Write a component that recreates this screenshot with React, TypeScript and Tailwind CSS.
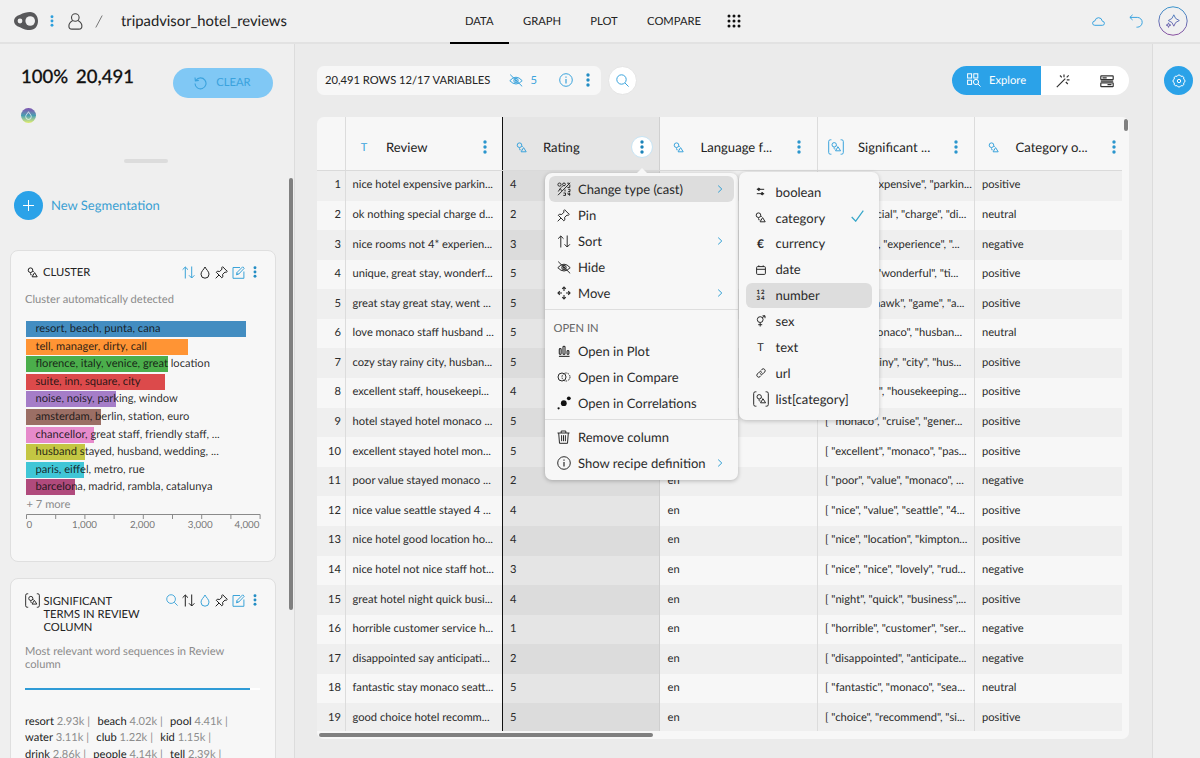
import type { ReactNode } from 'react';

type IconProps = { className?: string };

type Bar = { label: string; width: number; color: string };

const bars: Bar[] = [
  { label: 'resort, beach, punta, cana', width: 219.5, color: '#438dc1' },
  { label: 'tell, manager, dirty, call', width: 162, color: '#ff9434' },
  { label: 'florence, italy, venice, great location', width: 141.5, color: '#4bae4b' },
  { label: 'suite, inn, square, city', width: 138.5, color: '#dc4a4b' },
  { label: 'noise, noisy, parking, window', width: 89.5, color: '#a57dc8' },
  { label: 'amsterdam, berlin, station, euro', width: 74.5, color: '#9b6f65' },
  { label: 'chancellor, great staff, friendly staff, ...', width: 67.5, color: '#e68acb' },
  { label: 'husband stayed, husband, wedding, ...', width: 58.5, color: '#c4c643' },
  { label: 'paris, eiffel, metro, rue', width: 57.5, color: '#40c6d6' },
  { label: 'barcelona, madrid, rambla, catalunya', width: 49, color: '#b04a7c' },
];

const terms: [string, string][][] = [
  [['resort', '2.93k'], ['beach', '4.02k'], ['pool', '4.41k']],
  [['water', '3.11k'], ['club', '1.22k'], ['kid', '1.15k']],
  [['drink', '2.86k'], ['people', '4.14k'], ['tell', '2.39k']],
];

const rows: [string, string, string, string][] = [
  ['nice hotel expensive parkin...', '4', '[ "hotel", "expensive", "parkin...', 'positive'],
  ['ok nothing special charge d...', '2', '[ "ok", "special", "charge", "di...', 'neutral'],
  ['nice rooms not 4* experien...', '3', '[ "4* room", "experience", "...', 'negative'],
  ['unique, great stay, wonderf...', '5', '[ "unique", "wonderful", "ti...', 'positive'],
  ['great stay great stay, went ...', '5', '[ "stay seahawk", "game", "a...', 'positive'],
  ['love monaco staff husband ...', '5', '[ "love", "monaco", "husban...', 'neutral'],
  ['cozy stay rainy city, husban...', '5', '[ "cozy", "rainy", "city", "hus...', 'positive'],
  ['excellent staff, housekeepi...', '4', '[ "excellent", "housekeeping...', 'positive'],
  ['hotel stayed hotel monaco ...', '5', '[ "monaco", "cruise", "gener...', 'positive'],
  ['excellent stayed hotel mon...', '5', '[ "excellent", "monaco", "pas...', 'positive'],
  ['poor value stayed monaco ...', '2', '[ "poor", "value", "monaco", ...', 'negative'],
  ['nice value seattle stayed 4 ...', '4', '[ "nice", "value", "seattle", "4...', 'positive'],
  ['nice hotel good location ho...', '4', '[ "nice", "location", "kimpton...', 'positive'],
  ['nice hotel not nice staff hot...', '3', '[ "nice", "nice", "lovely", "rud...', 'negative'],
  ['great hotel night quick busi...', '4', '[ "night", "quick", "business",...', 'positive'],
  ['horrible customer service h...', '1', '[ "horrible", "customer", "ser...', 'negative'],
  ['disappointed say anticipati...', '2', '[ "disappointed", "anticipate...', 'negative'],
  ['fantastic stay monaco seatt...', '5', '[ "fantastic", "monaco", "sea...', 'neutral'],
  ['good choice hotel recomm...', '5', '[ "choice", "recommend", "si...', 'positive'],
];

function Dots({ className = 'h-[14px] w-[4px]' }: IconProps) {
  return (
    <svg viewBox="0 0 4 14" className={className} fill="currentColor">
      <circle cx="2" cy="2" r="1.7" />
      <circle cx="2" cy="7" r="1.7" />
      <circle cx="2" cy="12" r="1.7" />
    </svg>
  );
}

function CategoryIcon({ className = 'size-[11px]' }: IconProps) {
  return (
    <svg viewBox="0 0 11 11" className={className} fill="none" stroke="currentColor" strokeLinejoin="round">
      <circle cx="3.5" cy="3.2" r="2.3" />
      <path d="M3.500 5.500v2.300h1.800M5.700 4l1.300.8" strokeWidth=".7" />
      <path d="M7.600 5.600 10.200 9.800H5.100Z" />
    </svg>
  );
}

function ListCategoryIcon({ className = 'h-[16px] w-[16px]' }: IconProps) {
  return (
    <svg viewBox="0 0 16 16" className={className} fill="none" stroke="currentColor" strokeLinejoin="round">
      <path d="M3.400.8H2.400Q.7.800.7 2.400v11.200q0 1.600 1.700 1.600h1M12.600.8h1q1.700 0 1.700 1.600v11.200q0 1.600-1.700 1.600h-1" />
      <circle cx="6.200" cy="5.800" r="2.200" />
      <path d="M6.100 8v2h1.500M8.200 6.500l1.300.9" strokeWidth=".7" />
      <path d="M10 7.800l2.600 4H7.500Z" />
    </svg>
  );
}

function SortIcon({ className = 'h-[13px] w-[13px]' }: IconProps) {
  return (
    <svg viewBox="0 0 13 13" className={className} fill="none" stroke="currentColor">
      <path d="M3.300 12.500V1M.6 3.700 3.300 1 6 3.700M9.700.5V12M7 9.300 9.700 12l2.700-2.700" />
    </svg>
  );
}

function DropIcon({ className = 'h-[13px] w-[10px]' }: IconProps) {
  return (
    <svg viewBox="0 0 10 13" className={className} fill="none" stroke="currentColor">
      <path d="M5 1C4 3.400 1 5.400 1 8.200a4 4 0 0 0 8 0C9 5.400 6 3.400 5 1Z" />
    </svg>
  );
}

function PinIcon({ className = 'size-[13px]' }: IconProps) {
  return (
    <svg viewBox="0 0 13 13" className={className} fill="none" stroke="currentColor" strokeLinejoin="round">
      <path d="M7.600.7 12.300 5.400 11.200 6.300l-1.200-.2-2.400 2.300.3 2.400-1.100 1L1.300 6.300l1-1.100 2.400.3L7 3.100 6.700 1.800ZM4 9 .7 12.300" />
    </svg>
  );
}

function EditIcon({ className = 'size-[13px]' }: IconProps) {
  return (
    <svg viewBox="0 0 13 13" className={className} fill="none" stroke="currentColor">
      <path d="M8 1.500H1v10.800h10.900V5.500" />
      <path d="m4.400 8.800.6-2.300L10.700.8l1.500 1.500L6.600 8.200ZM5 6.600l1.500 1.500" />
    </svg>
  );
}

function SearchIcon({ className = 'size-[13px]' }: IconProps) {
  return (
    <svg viewBox="0 0 13 13" className={className} fill="none" stroke="currentColor">
      <circle cx="5.500" cy="5.500" r="4.700" />
      <path d="m9 9 3.600 3.600" />
    </svg>
  );
}

function EyeOffIcon({ className = 'h-[13px] w-[14px]' }: IconProps) {
  return (
    <svg viewBox="0 0 14 13" className={className} fill="none" stroke="currentColor">
      <path d="M.8 6.700Q7-.3 13.200 6.700 7 13.300.8 6.700ZM1.200.6l12 11.800" />
      <circle cx="7" cy="6.600" r="2.200" />
      <circle cx="7" cy="6.600" r=".8" fill="currentColor" />
    </svg>
  );
}

function InfoIcon({ className = 'size-[14px]' }: IconProps) {
  return (
    <svg viewBox="0 0 14 14" className={className} fill="none" stroke="currentColor">
      <circle cx="7" cy="7" r="6.300" />
      <path d="M7 6v4.400M7 3.500v1.300" strokeWidth="1.200" />
    </svg>
  );
}

function RotateIcon({ className = 'size-[13px]' }: IconProps) {
  return (
    <svg viewBox="0 0 13 13" className={className} fill="none" stroke="currentColor" strokeWidth="1.100">
      <path d="M2 3.200A5.500 5.500 0 1 1 1 6.500M1 .5l.4 3.300 3.400-.4" />
    </svg>
  );
}

function GearIcon() {
  return (
    <svg viewBox="0 0 14 14" className="size-[14px]" fill="none" stroke="currentColor" strokeLinejoin="round">
      <path d="M11.620 5.090a2 2 0 0 1 0 3.820 2 2 0 0 1-2.710 2.710 2 2 0 0 1-3.820 0 2 2 0 0 1-2.710-2.710 2 2 0 0 1 0-3.820 2 2 0 0 1 2.710-2.710 2 2 0 0 1 3.820 0 2 2 0 0 1 2.710 2.710Z" />
      <circle cx="7" cy="7" r="1.700" />
    </svg>
  );
}

function CastIcon() {
  return (
    <svg viewBox="0 0 14 14" className="size-[14px]" fill="none" stroke="currentColor">
      <path d="M1 13.200 13.200.8" />
      <circle cx="2.500" cy="2.600" r="1.600" />
      <circle cx="7" cy="2.400" r="1.400" />
      <path d="m4 5.700 1.600-1.600M1.300 9.500l2-3.200 1.200 2.500M10.200 1.200h2.200M12.800 2.600v2.800h-2.400M8 7.500v2M11.200 7.300h1.800v2.200h-1.800M6.500 11h2v2.400H6.300M11 10.700v1.600h2.300M12.600 10.500v3.200" />
    </svg>
  );
}

function MoveIcon() {
  return (
    <svg viewBox="0 0 14 14" className="size-[14px]" fill="none" stroke="currentColor" strokeWidth="1.100">
      <path d="M7 1v4M7 9v4M1 7h4M9 7h4M5.200 2.800 7 1l1.800 1.800M5.200 11.200 7 13l1.800-1.800M2.800 5.200 1 7l1.800 1.800M11.200 5.200 13 7l-1.800 1.800" />
    </svg>
  );
}

function PlotIcon() {
  return (
    <svg viewBox="0 0 13 13" className="size-[12px]" fill="none" stroke="currentColor" strokeWidth="1.200">
      <path d="M1 12.300h11.500" />
      <rect x="1.400" y="3.800" width="2" height="6.400" rx="1" />
      <rect x="5.400" y="1.400" width="2.200" height="8.800" rx="1" />
      <rect x="9.800" y="6" width="2" height="4.200" rx="1" />
    </svg>
  );
}

function CompareIcon() {
  return (
    <svg viewBox="0 0 14 10" className="h-[10px] w-[14px]" fill="none" stroke="currentColor">
      <circle cx="5" cy="5" r="4" />
      <circle cx="9" cy="5" r="4" strokeDasharray="1.600 .9" />
    </svg>
  );
}

function CorrelationIcon() {
  return (
    <svg viewBox="0 0 14 14" className="size-[14px]" fill="#111">
      <circle cx="1.600" cy="12.300" r="1.100" />
      <circle cx="6.800" cy="7.200" r="2.900" />
      <circle cx="11.800" cy="2.300" r="1.900" />
    </svg>
  );
}

function TrashIcon() {
  return (
    <svg viewBox="0 0 13 14" className="h-[14px] w-[13px]" fill="none" stroke="currentColor">
      <path d="M.5 3h12M4.200 3V1h4.600v2M1.700 3l.8 10.300h8L11.300 3M4.600 5.200v6M6.500 5.200v6M8.400 5.200v6" />
    </svg>
  );
}

function ChevronIcon() {
  return (
    <svg viewBox="0 0 6 8" className="h-[8px] w-[6px] text-[#2f9fd4]" fill="none" stroke="currentColor">
      <path d="m1.200.6 3.600 3.400-3.600 3.400" />
    </svg>
  );
}

function BooleanIcon() {
  return (
    <svg viewBox="0 0 9 9" className="size-[9px]" fill="currentColor" stroke="currentColor">
      <path d="M.8 2.300h7.400M.8 6.700h7.400" />
      <circle cx="2.800" cy="2.300" r="1.100" />
      <circle cx="6.200" cy="6.700" r="1.100" />
    </svg>
  );
}

function CalendarIcon() {
  return (
    <svg viewBox="0 0 10 10" className="size-[10px]" fill="none" stroke="currentColor">
      <rect x=".6" y="1.600" width="8.800" height="7.800" rx="1" />
      <path d="M.6 4.300h8.800M2.800.4v1.500M7.200.4v1.500" />
    </svg>
  );
}

function SexIcon() {
  return (
    <svg viewBox="0 0 10 12" className="h-[12px] w-[10px]" fill="none" stroke="currentColor">
      <circle cx="4.200" cy="4.600" r="2.900" />
      <path d="M4.200 7.500v4M2.200 9.700h4M6.300 2.600 9 .8M6.500.8H9v2.400" />
    </svg>
  );
}

function LinkIcon() {
  return (
    <svg viewBox="0 0 10 10" className="size-[10px]" fill="none" stroke="currentColor" strokeLinecap="round">
      <path d="M4.200 5.800a1.900 1.900 0 0 0 2.700 0l1.700-1.700A1.900 1.900 0 0 0 5.900 1.400l-.8.8M5.800 4.200a1.900 1.900 0 0 0-2.700 0L1.400 5.900a1.900 1.900 0 0 0 2.700 2.700l.8-.8" />
    </svg>
  );
}

function NumberIcon() {
  return (
    <span className="grid grid-cols-2 gap-x-px text-center text-[6px] leading-[5.500px] font-black">
      <span>1</span>
      <span>2</span>
      <span>3</span>
      <span>4</span>
    </span>
  );
}

function Header() {
  return (
    <header className="flex h-[44px] shrink-0 border-b-2 border-[#e2e2e2] bg-[#f0f0f0]">
      <div className="flex h-[42px] w-[450px] items-center pl-[14px]">
        <svg viewBox="0 0 24 18" className="h-[18px] w-[24px]">
          <path d="M6 2.800C9 .8 13 0 16 0c5 0 8 4 8 9s-3 9-8 9c-3 0-7-.8-10-2.800C2 14 0 12 0 9s2-5 6-6.200Z" fill="#58585a" />
          <circle cx="16.200" cy="9" r="4.800" fill="#f0f0f0" />
          <circle cx="6" cy="9" r="2.400" fill="#f0f0f0" />
        </svg>
        <Dots className="ml-[12px] h-[12px] w-[4px] text-[#2e9fdc]" />
        <svg viewBox="0 0 15 17" className="ml-[14px] h-[17px] w-[15px]" fill="none" stroke="#444" strokeWidth="1.100">
          <circle cx="7.300" cy="4.500" r="3.800" />
          <path d="M4.800 7.400Q.9 9.600.9 12.900q0 3.200 3 3.200h7q3 0 3-3.200 0-3.300-4-5.500" />
        </svg>
        <svg viewBox="0 0 8 13" className="ml-[12px] h-[13px] w-[8px]" stroke="#777">
          <path d="M.8 12.500 7.200.5" />
        </svg>
        <span className="ml-[18px] text-[14.800px] text-[#222]">tripadvisor_hotel_reviews</span>
      </div>
      <nav className="flex text-[11.200px] text-[#222]">
        <span className="flex h-[44px] w-[58.500px] justify-center border-b-2 border-black leading-[44px]">DATA</span>
        <span className="flex w-[67px] justify-center leading-[44px]">GRAPH</span>
        <span className="flex w-[57px] justify-center leading-[44px]">PLOT</span>
        <span className="flex w-[83px] justify-center leading-[44px]">COMPARE</span>
        <svg viewBox="0 0 14 14" className="mt-[14px] ml-[11px] size-[14px]" fill="#111">
          {[2, 7, 12].map((y) => [2, 7, 12].map((x) => <circle key={`${x}-${y}`} cx={x} cy={y} r="1.500" />))}
        </svg>
      </nav>
      <div className="ml-auto flex h-[42px] items-center pr-[12px] text-[#3aa3df]">
        <svg viewBox="0 0 13 9" className="h-[9px] w-[13px]" fill="none" stroke="currentColor">
          <path d="M2.800 8.300h7.600a2 2 0 0 0 0-4Q9.600.7 6.600.7T3 3.800Q.6 4.200.6 6.200q0 2.100 2.200 2.100Z" />
        </svg>
        <svg viewBox="0 0 14 14" className="ml-[24px] h-[14px] w-[14px]" fill="none" stroke="currentColor">
          <path d="M3.600.8.900 3.400 3.600 6M.9 3.400h7.400a4.900 4.900 0 0 1 0 9.800h-.8" />
        </svg>
        <svg viewBox="0 0 30 30" className="ml-[15px] size-[30px]" fill="none" stroke="url(#sparkle)">
          <defs>
            <linearGradient id="sparkle" x1="0" y1="0" x2="0" y2="30" gradientUnits="userSpaceOnUse">
              <stop offset="0" stopColor="#3796cd" />
              <stop offset="1" stopColor="#8c4d9e" />
            </linearGradient>
          </defs>
          <circle cx="15" cy="15" r="14.200" />
          <path d="M15.800 8.800q1 4.500 5.500 5.700-4.500 1.200-5.500 5.700-1-4.500-5.500-5.700 4.500-1.200 5.500-5.700Z" />
          <path d="m10.500 16.800.6 1.700 1.700.6-1.700.6-.6 1.700-.6-1.700-1.700-.6 1.700-.6Z" />
        </svg>
      </div>
    </header>
  );
}

function ClusterCard() {
  return (
    <section className="h-[312px] w-[266px] rounded-[8px] border border-[#dfdfdf] bg-[#f7f7f7] pt-[13px] pl-[14px]">
      <div className="flex h-[16px] items-center text-[#222]">
        <CategoryIcon className="ml-[2px] size-[11px]" />
        <h2 className="ml-[5px] w-[138.500px] pt-[2px] text-[11.200px]">CLUSTER</h2>
        <SortIcon className="h-[13px] w-[13px] text-[#3ba3d8]" />
        <DropIcon className="ml-[5px] h-[13px] w-[10px]" />
        <PinIcon className="ml-[5px] size-[13px]" />
        <EditIcon className="ml-[4px] size-[13px] text-[#3ba3d8]" />
        <Dots className="ml-[8px] h-[12px] w-[4px] text-[#238dc4]" />
      </div>
      <p className="mt-[12px] text-[11.150px] leading-[16px] text-[#8b8b8b]">Cluster automatically detected</p>
      <div className="mt-[13px] ml-px flex flex-col">
        {bars.map((bar) => (
          <div key={bar.label} className="relative h-[17.600px]">
            <div className="h-[16px]" style={{ width: bar.width, backgroundColor: bar.color }} />
            <span className="absolute top-0 left-[9.500px] text-[11.150px] leading-[16px] whitespace-nowrap text-[#111]/90">
              {bar.label}
            </span>
          </div>
        ))}
      </div>
      <p className="ml-[1.500px] text-[11.150px] leading-[15px] text-[#8b8b8b]">+ 7 more</p>
      <svg viewBox="0 0 235 5" className="mt-[2px] ml-px h-[5px] w-[235px]" fill="none" stroke="#8a8a8a">
        <path d="M.5 5V.5h233.600V5M29.700.5V5M58.900.5V5M88.100.5V5M117.300.5V5M146.500.5V5M175.700.5V5M204.900.5V5" />
      </svg>
      <div className="ml-[1.500px] flex w-[233px] justify-between text-[9.800px] leading-[13px] text-[#777]">
        <span>0</span>
        <span className="ml-[18px]">1,000</span>
        <span className="ml-[11px]">2,000</span>
        <span className="ml-[11px]">3,000</span>
        <span>4,000</span>
      </div>
    </section>
  );
}

function TermsCard() {
  return (
    <section className="mt-[16px] h-[300px] w-[266px] rounded-[8px] border border-[#dfdfdf] bg-[#f7f7f7] pt-[13px] pl-[14px]">
      <div className="flex items-start text-[#222]">
        <ListCategoryIcon className="mt-[1px] h-[15px] w-[15px]" />
        <h2 className="ml-[3.500px] w-[122px] pt-[2.500px] text-[11.200px] leading-[13px]">
          SIGNIFICANT
          <br />
          TERMS IN REVIEW
          <br />
          COLUMN
        </h2>
        <div className="flex h-[16px] items-center">
          <SearchIcon className="size-[12px] text-[#3ba3d8]" />
          <SortIcon className="ml-[4px] h-[13px] w-[13px]" />
          <DropIcon className="ml-[5px] h-[13px] w-[10px] text-[#3ba3d8]" />
          <PinIcon className="ml-[5px] size-[13px]" />
          <EditIcon className="ml-[4px] size-[13px] text-[#3ba3d8]" />
          <Dots className="ml-[8px] h-[12px] w-[4px] text-[#238dc4]" />
        </div>
      </div>
      <p className="mt-[11px] text-[11.150px] leading-[13px] text-[#8b8b8b]">
        Most relevant word sequences in Review
        <br />
        column
      </p>
      <div className="mt-[17.500px] h-[2px] w-[235px] bg-white">
        <div className="h-full w-[225px] bg-[#2f9bd6]" />
      </div>
      <div className="mt-[23.500px] text-[11.150px] leading-[16.500px] whitespace-pre text-[#222]">
        {terms.map((line) => (
          <div key={line[0][0]}>
            {line.map(([word, count]) => (
              <span key={word} className="mr-[7.300px]">
                {word} <span className="text-[#8d8d8d]">{count} |</span>
              </span>
            ))}
          </div>
        ))}
      </div>
    </section>
  );
}

function Sidebar() {
  return (
    <aside className="flex w-[295px] shrink-0 flex-col border-r border-[#dcdcdc] bg-[#efefef]">
      <div className="h-[134px] pt-[20px] pl-[21px]">
        <div className="flex items-start">
          <div className="flex w-[151.500px] gap-[8px] text-[18.500px] leading-[24px] font-medium text-[#111] [-webkit-text-stroke:0.250px_#111]">
            <span>100%</span>
            <span>20,491</span>
          </div>
          <div className="mt-[4px] flex h-[30px] w-[100px] items-center justify-center gap-[9px] rounded-full bg-[#80c8f5] text-[11.200px] text-[#3aa2dd]">
            <RotateIcon />
            <span className="pt-px">CLEAR</span>
          </div>
        </div>
        <div className="mt-[10px] flex size-[15px] items-center justify-center rounded-full bg-linear-to-b from-[#7b4fb0] via-[#469eb0] to-[#e4ee62] text-white">
          <DropIcon className="h-[9px] w-[7px]" />
        </div>
        <div className="mt-[36px] ml-[103px] h-[4px] w-[44px] rounded-full bg-[#dcdcdc]" />
      </div>
      <div className="flex min-h-0 flex-1 overflow-hidden">
        <div className="w-[289px] pl-[10px]">
          <div className="mt-[13px] mb-[30px] ml-[4px] flex items-center">
            <div className="flex size-[29px] items-center justify-center rounded-full bg-[#2ba2e8] text-white">
              <svg viewBox="0 0 11 11" className="size-[11px]" stroke="currentColor">
                <path d="M5.500 0v11M0 5.500h11" />
              </svg>
            </div>
            <span className="ml-[8px] text-[13px] text-[#3a9fd3]">New Segmentation</span>
          </div>
          <ClusterCard />
          <TermsCard />
        </div>
        <div className="h-[432px] w-[4px] rounded-full bg-[#808080]" />
      </div>
    </aside>
  );
}

function Toolbar() {
  return (
    <div className="flex h-[30px] items-center">
      <div className="flex h-[29px] w-[284px] items-center rounded-[7px] bg-[#f7f7f7] pl-[8px] text-[11.200px] text-[#222]">
        <span className="w-[184px] pt-[2px] whitespace-nowrap">20,491 ROWS 12/17 VARIABLES</span>
        <EyeOffIcon className="h-[13px] w-[14px] text-[#3aa3dc]" />
        <span className="ml-[7.500px] w-[28.500px] pt-[2px] text-[#3aa3dc]">5</span>
        <InfoIcon className="size-[14px] text-[#3aa3dc]" />
        <Dots className="ml-[13px] h-[14px] w-[4px] text-[#238dc4]" />
      </div>
      <div className="ml-[7px] flex size-[29px] items-center justify-center rounded-full border border-[#e4e4e4] bg-white text-[#3aa3dc]">
        <SearchIcon />
      </div>
      <div className="ml-auto flex h-[29px] w-[177px] overflow-hidden rounded-full bg-white text-[#333]">
        <div className="flex w-[89px] items-center bg-[#2ba2e8] pl-[15px] text-[11.200px] text-white">
          <svg viewBox="0 0 14 14" className="size-[14px]" fill="none" stroke="currentColor">
            <rect x=".6" y=".8" width="4" height="4.200" />
            <rect x="6.800" y=".8" width="4" height="4.200" />
            <rect x=".6" y="7.200" width="4" height="4.200" />
            <circle cx="9" cy="9" r="2.600" />
            <path d="m10.900 10.900 2.600 2.600" />
          </svg>
          <span className="ml-[8px] pt-[2px]">Explore</span>
        </div>
        <svg viewBox="0 0 14 14" className="mt-[8px] ml-[15px] size-[14px]" fill="none" stroke="currentColor">
          <path d="m.8 13.200 7-7M7.800 6.200l1.500-1.500M8 .6v2.600M12.700 1.300l-2 2M10.800 5.800h2.700M9.800 8l2 2M4 1.500l1.800 1.800" strokeWidth="1.200" />
        </svg>
        <svg viewBox="0 0 14 13" className="mt-[9px] ml-[30px] h-[13px] w-[14px]" fill="none" stroke="currentColor" strokeWidth="1.200">
          <rect x=".8" y=".8" width="12.400" height="3.800" rx=".6" />
          <rect x=".8" y="7.800" width="12.400" height="3.800" rx=".6" />
          <path d="M2.500 2.800h4.200M7.500 9.700h4M.8 6.200h12.400" />
        </svg>
      </div>
    </div>
  );
}

function HeadCell({ icon, label, className, active }: { icon: ReactNode; label: string; className: string; active?: boolean }) {
  return (
    <div className={`flex h-full shrink-0 items-center border-r pt-[7px] ${className}`}>
      <span className="flex w-[20px] justify-center text-[#3aa3dc]">{icon}</span>
      <span className="ml-[12px] flex-1 pt-px text-[13.100px] whitespace-nowrap text-[#222]">{label}</span>
      {active ? (
        <span className="mr-[6px] flex size-[22px] items-center justify-center rounded-full border border-[#c7e4f4] bg-white text-[#1b83b9]">
          <Dots />
        </span>
      ) : (
        <Dots className="mr-[15.500px] h-[14px] w-[4px] text-[#2b96cd]" />
      )}
    </div>
  );
}

function DataTable() {
  return (
    <div className="mt-[22px] flex h-[622px] w-[812px] flex-col overflow-hidden rounded-[7px] bg-[#f7f7f7]">
      <div className="flex h-[614px]">
        <div className="w-[805px] overflow-hidden">
          <div className="flex h-[54px] border-b border-[#dadada]">
            <div className="h-full w-[29px] shrink-0 border-r border-[#dcdcdc]" />
            <HeadCell
              className="w-[157px] border-[#111] pl-[8px]"
              icon={<span className="pt-[2px] text-[11px]">T</span>}
              label="Review"
            />
            <HeadCell className="w-[157px] border-[#d0d0d0] bg-[#e5e5e5] pl-[8px]" icon={<CategoryIcon />} label="Rating" active />
            <HeadCell className="w-[157.500px] border-[#dcdcdc] pl-[8.500px]" icon={<CategoryIcon />} label="Language f..." />
            <HeadCell className="w-[157px] border-[#dcdcdc] pl-[8.500px]" icon={<ListCategoryIcon />} label="Significant ..." />
            <HeadCell className="w-[157.500px] border-transparent pl-[9px]" icon={<CategoryIcon />} label="Category o..." />
          </div>
          <div className="text-[11.150px] text-[#2b2b2b]">
            {rows.map(([review, rating, significant, category], i) => (
              <div
                key={review}
                className={`flex h-[29.580px] items-center whitespace-pre *:flex *:h-full *:shrink-0 *:items-center *:border-r ${i % 2 ? 'bg-[#f7f7f7]' : 'bg-[#efefef]'}`}
              >
                <div className="w-[29px] justify-end border-[#dcdcdc] pr-[4px]">{i + 1}</div>
                <div className="w-[157px] border-[#111] pl-[6.500px]">{review}</div>
                <div className={`w-[157px] border-[#cfcfcf] pl-[7px] ${i % 2 ? 'bg-[#e5e5e5]' : 'bg-[#dcdcdc]'}`}>{rating}</div>
                <div className="w-[157.500px] border-[#dcdcdc] pl-[7.500px]">en</div>
                <div className="w-[157px] border-[#dcdcdc] pl-[7.500px]">{significant}</div>
                <div className="w-[147.500px] border-transparent pl-[7.500px]">{category}</div>
              </div>
            ))}
          </div>
        </div>
        <div className="mt-[2px] ml-[2px] h-[12px] w-[4px] rounded-full bg-[#808080]" />
      </div>
      <div className="mt-[2px] ml-[2px] h-[4px] w-[334px] rounded-full bg-[#808080]" />
    </div>
  );
}

function MenuItem({ icon, label, arrow, active }: { icon: ReactNode; label: string; arrow?: boolean; active?: boolean }) {
  return (
    <div className={`mx-[4px] flex h-[26px] items-center rounded-[6px] pr-[11px] ${active ? 'bg-[#dddddd]' : ''}`}>
      <span className="flex w-[29px] justify-center">{icon}</span>
      <span className="flex-1 pt-px whitespace-nowrap">{label}</span>
      {arrow && <ChevronIcon />}
    </div>
  );
}

function ColumnMenu() {
  return (
    <div className="absolute top-[173px] left-[545px] h-[307px] w-[193px] rounded-[7px] bg-[#f7f7f7] pt-[3px] text-[13.020px] text-[#2a2a2a] shadow-[0_1px_4px_rgba(0,0,0,0.25)]">
      <svg viewBox="0 0 10 5" className="absolute -top-[5px] left-[92px] h-[5px] w-[10px]" fill="#f7f7f7">
        <path d="M0 5 5 0l5 5Z" />
      </svg>
      <MenuItem icon={<CastIcon />} label="Change type (cast)" arrow active />
      <MenuItem icon={<PinIcon />} label="Pin" />
      <MenuItem icon={<SortIcon className="h-[13px] w-[14px]" />} label="Sort" arrow />
      <MenuItem icon={<EyeOffIcon />} label="Hide" />
      <MenuItem icon={<MoveIcon />} label="Move" arrow />
      <div className="mt-[3px] h-px bg-[#dedede]" />
      <div className="mt-[11px] mb-px ml-[8.500px] text-[11.150px] leading-[16px] text-[#666]">OPEN IN</div>
      <MenuItem icon={<PlotIcon />} label="Open in Plot" />
      <MenuItem icon={<CompareIcon />} label="Open in Compare" />
      <MenuItem icon={<CorrelationIcon />} label="Open in Correlations" />
      <div className="mt-[3px] mb-[4px] h-px bg-[#dedede]" />
      <MenuItem icon={<TrashIcon />} label="Remove column" />
      <MenuItem icon={<InfoIcon />} label="Show recipe definition" arrow />
    </div>
  );
}

const castTypes: { label: string; icon: ReactNode }[] = [
  { label: 'boolean', icon: <BooleanIcon /> },
  { label: 'category', icon: <CategoryIcon /> },
  { label: 'currency', icon: <span className="text-[12px] font-bold">€</span> },
  { label: 'date', icon: <CalendarIcon /> },
  { label: 'number', icon: <NumberIcon /> },
  { label: 'sex', icon: <SexIcon /> },
  { label: 'text', icon: <span className="pt-px text-[11px]">T</span> },
  { label: 'url', icon: <LinkIcon /> },
  { label: 'list[category]', icon: <ListCategoryIcon /> },
];

function CastMenu() {
  return (
    <div className="absolute top-[172px] left-[739px] h-[248px] w-[140px] rounded-[7px] bg-[#f7f7f7] px-[7px] pt-[7px] text-[13.020px] text-[#2a2a2a] shadow-[0_1px_4px_rgba(0,0,0,0.22)]">
      {castTypes.map(({ label, icon }) => (
        <div
          key={label}
          className={`flex h-[25.900px] items-center rounded-[6px] ${label === 'number' ? 'bg-[#dddddd]' : ''}`}
        >
          <span className="flex w-[29px] justify-center">{icon}</span>
          <span className="flex-1 pt-px pl-[0.500px] whitespace-nowrap">{label}</span>
          {label === 'category' && (
            <svg viewBox="0 0 13 12" className="mr-[8px] mb-[4px] h-[12px] w-[13px]" fill="none" stroke="#35a6c9" strokeWidth="1.200">
              <path d="m.7 7 4 4.200L12.300.7" />
            </svg>
          )}
        </div>
      ))}
    </div>
  );
}

export default function App() {
  return (
    <div className="relative flex h-[758px] w-[1200px] flex-col overflow-hidden bg-[#ebebeb] font-['Lato',sans-serif] [text-rendering:geometricPrecision]">
      <Header />
      <div className="flex min-h-0 flex-1">
        <Sidebar />
        <main className="w-[857px] pt-[21px] pr-[23px] pl-[22px]">
          <Toolbar />
          <DataTable />
        </main>
        <aside className="flex-1 border-l border-[#dcdcdc] bg-[#efefef] pt-[22px] pl-[11px]">
          <div className="flex size-[29px] items-center justify-center rounded-full bg-[#2ba2e8] text-white">
            <GearIcon />
          </div>
        </aside>
      </div>
      <ColumnMenu />
      <CastMenu />
    </div>
  );
}
